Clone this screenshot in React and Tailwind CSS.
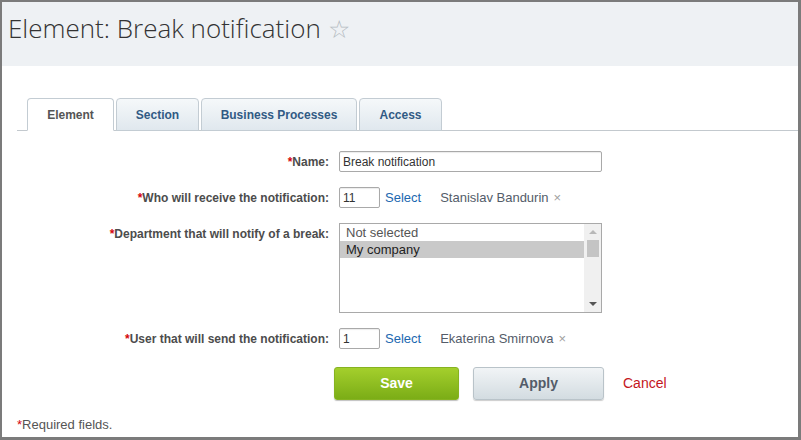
import React from 'react';

const tabs = [
  { id: 'element', label: 'Element', w: 'w-[87px]' },
  { id: 'section', label: 'Section', w: 'w-[83px]' },
  { id: 'bp', label: 'Business Processes', w: 'w-[156px]' },
  { id: 'access', label: 'Access', w: 'w-[83px]' },
];

const Label = ({ children, top }) => (
  <div
    className={`w-[337px] shrink-0 pr-[10px] text-right text-[12px] font-bold text-[#4c4c4c] ${top ? 'pt-[2px]' : ''}`}
  >
    <span className="text-[#d4060d]">*</span>
    {children}
  </div>
);

const UserPicker = ({ id, name }) => (
  <div className="flex items-center">
    <input
      readOnly
      value={id}
      className="w-[41px] h-[21px] border border-[#a9a9a9] rounded-[2px] px-[3px] text-[12px] text-[#333] outline-none shadow-[inset_0_1px_1px_rgba(0,0,0,0.08)]"
    />
    <a href="#" className="ml-[5px] text-[13px] text-[#2067b0]">Select</a>
    <span className="ml-[19px] text-[13px] text-[#535c69]">{name}</span>
    <span className="ml-[5px] text-[13px] text-[#a0a0a0] leading-none">×</span>
  </div>
);

const App = () => {
  return (
    <div className="w-[801px] h-[440px] overflow-hidden bg-white border-l-2 border-t-2 border-r-[3px] border-b-[3px] border-[#7b7b7b] font-['Liberation_Sans',Arial,sans-serif]">
      <div className="h-[64px] bg-[#eef1f4] flex items-start pl-[6px] pt-[10px]">
        <h1 className="font-['Open_Sans',sans-serif] font-light text-[26px] leading-[32px] text-[#333]">
          Element: Break notification
        </h1>
        <span className="ml-[7px] mt-[1px] text-[25px] leading-[32px] text-[#b5bcc2]">☆</span>
      </div>

      <div className="pt-[32px]">
        <div className="ml-[15px] flex items-end border-b border-[#c3c9ce] h-[33px]">
          <div className="w-[10px]" />
          {tabs.map((t, i) => (
            <div
              key={t.id}
              className={`${t.w} ${i > 0 ? 'ml-[2px]' : ''} h-[33px] -mb-px flex items-center justify-center rounded-t-[4px] border border-[#c3ccd3] text-[12px] font-bold ${
                i === 0
                  ? 'bg-white border-b-white text-[#555]'
                  : 'bg-gradient-to-b from-[#f5f8fa] to-[#e0e8ee] text-[#315a84]'
              }`}
            >
              {t.label}
            </div>
          ))}
        </div>

        <div className="pt-[20px]">
          <div className="flex items-center h-[21px]">
            <Label>Name:</Label>
            <input
              readOnly
              value="Break notification"
              className="w-[263px] h-[21px] border border-[#a9a9a9] rounded-[2px] px-[3px] text-[12px] text-[#333] outline-none shadow-[inset_0_1px_1px_rgba(0,0,0,0.08)]"
            />
          </div>

          <div className="flex items-center h-[21px] mt-[15px]">
            <Label>Who will receive the notification:</Label>
            <UserPicker id="11" name="Stanislav Bandurin" />
          </div>

          <div className="flex items-start mt-[15px]">
            <Label top>Department that will notify of a break:</Label>
            <div className="w-[263px] h-[90px] border border-[#a9a9a9] flex text-[13px]">
              <div className="flex-1">
                <div className="h-[17px] leading-[17px] pl-[6px] text-[#555]">Not selected</div>
                <div className="h-[17px] leading-[17px] pl-[6px] bg-[#c9c9c9] text-[#222]">My company</div>
              </div>
              <div className="w-[17px] bg-[#f0f0f0] flex flex-col items-center py-[2px]">
                <svg width="8" height="6" viewBox="0 0 8 6" className="mt-[3px]">
                  <path d="M0 5 L4 1 L8 5 Z" fill="#b8b8b8" />
                </svg>
                <div className="mt-[5px] w-[12px] h-[17px] bg-[#c4c4c4]" />
                <div className="flex-1" />
                <svg width="8" height="6" viewBox="0 0 8 6" className="mb-[3px]">
                  <path d="M0 1 L8 1 L4 5 Z" fill="#555" />
                </svg>
              </div>
            </div>
          </div>

          <div className="flex items-center h-[21px] mt-[15px]">
            <Label>User that will send the notification:</Label>
            <UserPicker id="1" name="Ekaterina Smirnova" />
          </div>

          <div className="flex items-center mt-[18px] pl-[332px]">
            <button className="w-[125px] h-[33px] rounded-[3px] bg-gradient-to-b from-[#a4cf2c] to-[#7bad16] border border-[#86b321] shadow-[0_1px_1px_rgba(0,0,0,0.25)] text-white text-[14px] font-bold">
              Save
            </button>
            <button className="ml-[14px] w-[131px] h-[33px] rounded-[3px] bg-gradient-to-b from-[#f1f4f6] to-[#d3dce1] border border-[#b9c3c9] shadow-[0_1px_1px_rgba(0,0,0,0.2)] text-[#535c69] text-[14px] font-bold">
              Apply
            </button>
            <a href="#" className="ml-[19px] text-[14px] text-[#c4161c]">Cancel</a>
          </div>

          <div className="mt-[15px] pl-[15px] text-[13px] text-[#555]">
            <span className="text-[#d4060d]">*</span>Required fields.
          </div>
        </div>
      </div>
    </div>
  );
};

export default App;
